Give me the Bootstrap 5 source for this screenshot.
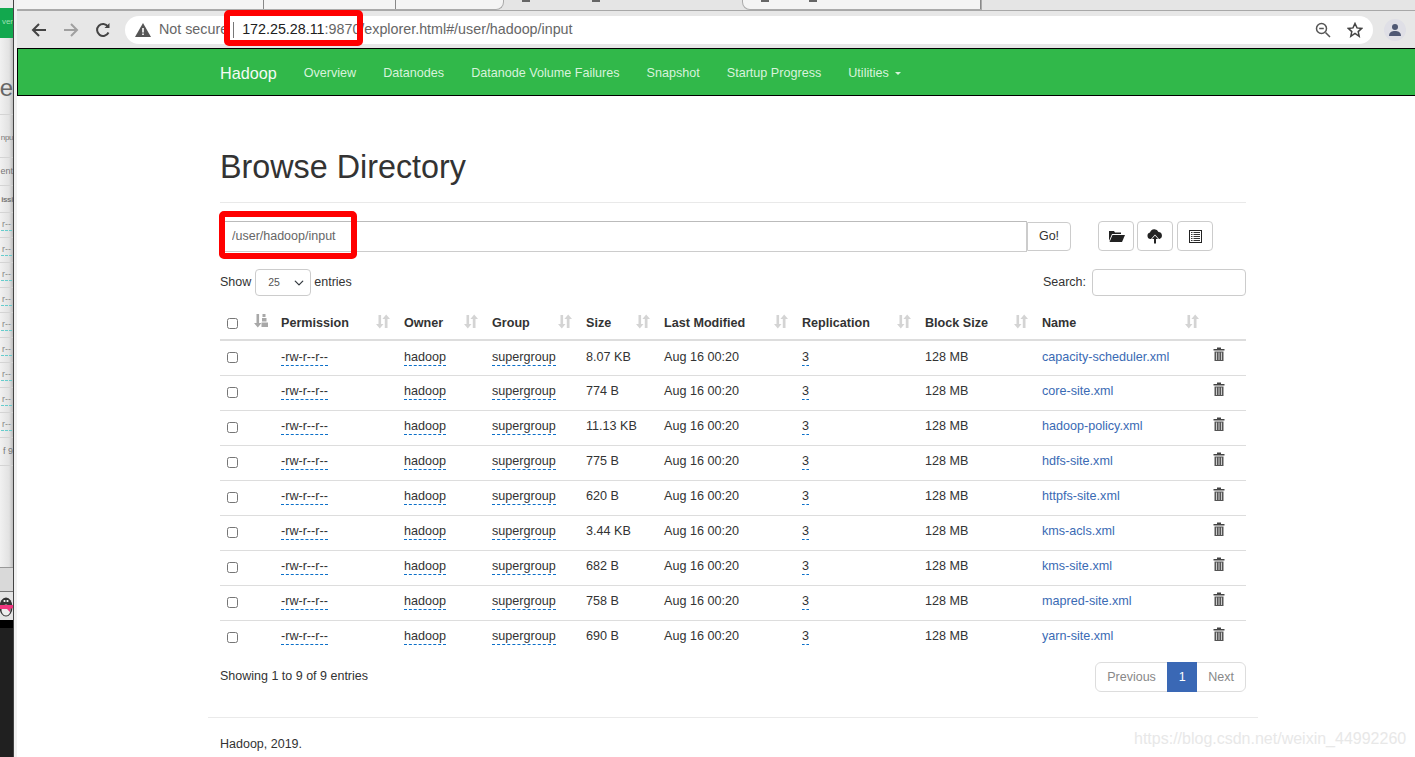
<!DOCTYPE html>
<html lang="en">
<head>
<meta charset="utf-8">
<title>Browsing HDFS</title>
<link href="https://cdn.jsdelivr.net/npm/bootstrap@5.3.0/dist/css/bootstrap.min.css" rel="stylesheet">
<style>
html,body{height:757px;overflow:hidden}
body{font-family:"Liberation Sans",Arial,sans-serif;font-size:13px;color:#333;background:#fff;position:relative;display:flex}
.sliver{width:14px;flex:none;height:757px;overflow:hidden;border-right:1px solid #444;display:flex;flex-direction:column;font-size:9px;color:#777;white-space:nowrap;background:linear-gradient(90deg,#f1f1f1,#e2e2e2 70%,#bdbdbd)}
.slgap{width:3px;flex:none;background:#f1f1f1}
.sl-top{height:8px;flex:none;background:#ebebeb}
.sl-green{height:30px;flex:none;background:#12a84e;color:#9fe0b5;font-size:8px;line-height:28px;display:flex;justify-content:flex-end;overflow:hidden}
.sl-gap{height:30px;flex:none}
.sl-e{height:47px;flex:none;font-size:24px;line-height:40px;color:#666;display:flex;justify-content:flex-end;overflow:hidden;border-bottom:1px solid #d4d4d4}
.sl-row{flex:none;display:flex;justify-content:flex-end;overflow:hidden;border-bottom:1px solid #d4d4d4}
.tight{font-size:8px;letter-spacing:-.4px}
.h43{height:43px;line-height:46px}.h28{height:28px;line-height:27px}.h27{height:27px;line-height:27px}
.sl-perm{flex:none;height:25px;display:flex;justify-content:center;align-items:center;border-bottom:1px solid #d4d4d4;color:#888}
.sl-perm span{border-bottom:1px dashed #6cc;line-height:9px;font-size:9px;padding:0 1px 1px}
.sl-fill{height:101px;flex:none}
.sl-foot{height:25px;flex:none;background:#d9d9d9;border-top:1px solid #999;border-bottom:1px solid #777}
.sl-peng{height:28px;flex:none;background:#e4e4e4;display:flex;justify-content:flex-end;align-items:center;overflow:hidden}
.sl-black-top{height:8px;background:#000;flex:none}
.sl-black{flex:1;background:#202020}
.main{flex:1;min-width:0;display:flex;flex-direction:column;background:#f3f3f3}
.tabstrip{height:11px;background:#e5e5e5;border-bottom:1px solid #a8a8a8;display:flex;flex:none;overflow:hidden}
.tabcur{width:487px;height:10px;background:#f4f4f4;border-right:1px solid #aaa;border-bottom:1px solid #aaa;border-radius:0 0 8px 0;display:flex;flex:none}
.tabnext{width:240px;height:10px;border:1px solid #aaa;border-top:0;border-radius:0 0 0 8px;background:#f4f4f4;display:flex;flex:none}
.tsep{width:1px;height:9px;background:#888;flex:none}
.s1{margin-left:auto;margin-right:131px}.s2{margin-right:107px}
.tfrag{width:8px;height:2px;background:#666;flex:none}
.f1{margin-left:18px}.f2{margin-left:62px;margin-right:142px}.f3{margin-left:18px}.f4{margin-left:40px}
.toolbar{height:37px;background:#e7e7e7;display:flex;align-items:center;flex:none;padding-left:6px}
.navico{width:32px;display:flex;justify-content:center;flex:none}
.omni{width:1248px;height:28px;border-radius:14px;background:#fff;margin-left:6px;display:flex;align-items:center;font-size:14.3px;color:#666;padding:0 10px 0 10px;white-space:nowrap}
.omni b{font-weight:400;color:#202020}
.omni-sep{width:1px;height:16px;background:#777;margin:0 8px 0 5px}
.omni-end{margin-left:auto;display:flex;gap:16px;align-items:center}
.avatar{width:22px;height:22px;border-radius:50%;background:#dfdfe6;margin-left:11px;display:flex;align-items:center;justify-content:center;flex:none}
.hnav{height:48px;background:#31b84a;border:1px solid #000;border-right:0;padding:2px 0 0 202px;flex:none;flex-wrap:nowrap;justify-content:flex-start}
.hnav .navbar-brand{color:#fff;font-size:16.2px;padding:0;margin-right:27px;opacity:.95}
.hnav .nav-link{color:#d8f3dc;font-size:12.6px;padding:1px 0 0;margin-right:27px}
.hnav .dropdown-toggle::after{vertical-align:2px;margin-left:6px;color:#d8f3dc}
.pagebody{flex:1;background:#fff;padding:0 169px 0 203px;min-height:0}
.ptitle{font-size:32.3px;font-weight:400;color:#333;margin:0;padding:52px 0 16px;line-height:38px;border-bottom:1px solid #e9e9e9}
.pathrow{margin-top:18px;height:31px;display:flex;align-items:flex-start}
.pathinput{width:807px;height:31px;border:1px solid #ccc;border-top-color:#bbb;border-radius:0;font-size:12.5px;color:#666;padding:0 11px 2px;box-shadow:none;font-family:inherit}
.gobtn{height:29px;width:44px;border:1px solid #ccc;border-radius:0 4px 4px 0;font-size:12.5px;color:#333;padding:0;margin:1px 0 0 0;background:#fff;flex:none}
.iconbtn{width:36px;height:30px;border:1px solid #ccc;border-radius:4px;background:#fff;padding:0;display:flex;align-items:center;justify-content:center;flex:none}
.tools{margin-left:27px;gap:3px}
.tgap{margin-left:1px}
.lenrow{margin-top:17px;height:27px;font-size:12.5px;color:#333}
.lensel{width:56px;height:27px;font-size:10.5px;padding:0 0 0 12px;border:1px solid #ccc;border-radius:4px;color:#555;background-position:right 5px center;background-size:12px 10px;margin:0 3px 0 4px}
.searchbox{width:154px;height:27px;border:1px solid #ccc;border-radius:4px;margin-left:6px;padding:0 6px;font-size:12px}
.dtable{margin:8px 0 0;table-layout:fixed;width:1026px;font-size:12.6px;color:#333;border-color:#ddd}
.dtable th{height:36px;padding:0 8px;font-weight:700;font-size:12.6px;color:#333;border-bottom:2px solid #ddd;vertical-align:middle;position:relative;white-space:nowrap;padding-top:3px}
.dtable td{height:35px;padding:0 8px 2px;border-bottom:1px solid #ddd;vertical-align:middle;white-space:nowrap;color:#333}
.dtable tbody tr:first-child td{padding-bottom:0}
.dtable tr:last-child td{border-bottom:0}
.srt{position:absolute;right:6px;top:10px}
.srt0{position:absolute;left:7px;top:9px}
.dash{border-bottom:1px dashed #0a6fc9;padding-bottom:1px;color:#333}
.ck{width:11px;height:11px;border:1px solid #767676;border-radius:2.5px;margin:0;background:#fff;appearance:none;display:block;margin-left:-1px}
.dtable td .ck{margin-top:2px}
.dtable tbody tr:first-child td .ck{margin-top:0}
.flink{color:#3a6ab4;text-decoration:none}
.trash{display:block;margin:-5px 0 0 0}
.dtable tbody tr:first-child .trash{margin-top:-7px}
.foot{display:flex;justify-content:space-between;align-items:flex-start;margin-top:7px;font-size:12.5px}
.foot-info{padding-top:5px}
.pagi{margin:0}
.pagi .page-link{height:30px;font-size:12.5px;line-height:17px;color:#888;border-color:#ddd;padding:6px 11px}
.pagi .page-item:first-child .page-link{padding:6px 11.5px}
.pagi .page-item.active .page-link{background:#3a68b5;border-color:#3a68b5;color:#fff;padding:6px 10.5px}
.hrfoot{border-top:1px solid #eaeaea;margin:25px -12px 0;height:0}
.copy{margin-top:17px;font-size:12.5px}
.redbox{position:absolute;border:6px solid #f00;border-radius:5px;pointer-events:none}
.r1{left:224px;top:10px;width:139px;height:36px}
.r2{left:219px;top:211px;width:138px;height:48px}
.wmark{position:absolute;left:1134px;top:727px;font-size:16px;color:#e8e8e8;white-space:nowrap}
</style>
</head>
<body>
<aside class="sliver" aria-hidden="true">
<div class="sl-top"></div><div class="sl-green">ver</div><div class="sl-gap"></div>
<div class="sl-e">e</div>
<div class="sl-row h43 tight">npu</div><div class="sl-row h28">ent</div><div class="sl-row h27 tight"><b>issi</b></div>
<div class="sl-perm"><span>r--</span></div><div class="sl-perm"><span>r--</span></div><div class="sl-perm"><span>r--</span></div><div class="sl-perm"><span>r--</span></div><div class="sl-perm"><span>r--</span></div><div class="sl-perm"><span>r--</span></div><div class="sl-perm"><span>r--</span></div><div class="sl-perm"><span>r--</span></div><div class="sl-perm"><span>r--</span></div>
<div class="sl-row h28">f 9</div>
<div class="sl-fill"></div>
<div class="sl-foot"></div>
<div class="sl-peng"><svg width="13" height="22" viewBox="0 0 13 22"><ellipse cx="6" cy="12" rx="6.500" ry="9.500" fill="#333"/><ellipse cx="6" cy="15" rx="4.500" ry="5.500" fill="#eee"/><circle cx="4.500" cy="6" r="1.100" fill="#fff"/><circle cx="7.500" cy="6" r="1.100" fill="#fff"/><path d="M0 10h13v3l-3 1 0 3-3-3H0Z" fill="#f0357e"/></svg></div>
<div class="sl-black-top"></div><div class="sl-black"></div>
</aside>
<div class="slgap"></div>
<div class="main">
<div class="tabstrip"><div class="tabcur"><span class="tsep s1"></span><span class="tsep s2"></span></div><span class="tfrag f1"></span><span class="tfrag f2"></span><div class="tabnext"><span class="tfrag f3"></span><span class="tfrag f4"></span><span class="tsep ms-auto"></span></div></div>
<div class="toolbar">
<div class="navico"><svg width="18" height="18" viewBox="0 0 18 18" fill="none" stroke="#444" stroke-width="2"><path d="M16 9H3M9 3 3 9l6 6"/></svg></div>
<div class="navico"><svg width="18" height="18" viewBox="0 0 18 18" fill="none" stroke="#a0a0a0" stroke-width="2"><path d="M2 9h13M9 3l6 6-6 6"/></svg></div>
<div class="navico"><svg width="18" height="18" viewBox="0 0 18 18" fill="none" stroke="#444" stroke-width="2"><path d="M14.500 11.500A6 6 0 1 1 14 5.500"/><path d="M15.500 2v5h-5" fill="#444" stroke="none"/></svg></div>
<div class="omni">
<svg width="16" height="14" viewBox="0 0 16 14" class="me-2"><path d="M8 0 16 14H0Z" fill="#555"/><path d="M7.200 5h1.600v4.500H7.200ZM7.200 10.500h1.600V12H7.200Z" fill="#fff"/></svg>
<span>Not secure</span><span class="omni-sep"></span><b>172.25.28.11</b><span>:9870/explorer.html#/user/hadoop/input</span>
<span class="omni-end">
<svg width="16" height="16" viewBox="0 0 16 16" fill="none" stroke="#555" stroke-width="1.500"><circle cx="6.500" cy="6.500" r="5"/><path d="M10.500 10.500 15 15M4.200 6.500h4.600"/></svg>
<svg width="16" height="16" viewBox="0 0 16 16" fill="none" stroke="#444" stroke-width="1.500"><path d="m8 1.500 2 4.400 4.700.5-3.500 3.200 1 4.700L8 11.500l-4.200 2.800 1-4.700L1.300 6.400 6 5.900Z"/></svg>
</span>
</div>
<div class="avatar"><svg width="14" height="14" viewBox="0 0 14 14" fill="#4f5874"><circle cx="7" cy="4" r="3"/><path d="M1 13c0-4 3-5 6-5s6 1 6 5Z"/></svg></div>
</div>
<nav class="navbar hnav">
<a class="navbar-brand" href="#">Hadoop</a>
<a class="nav-link" href="#">Overview</a><a class="nav-link" href="#">Datanodes</a><a class="nav-link" href="#">Datanode Volume Failures</a><a class="nav-link" href="#">Snapshot</a><a class="nav-link" href="#">Startup Progress</a><a class="nav-link dropdown-toggle" href="#">Utilities</a>
</nav>
<div class="pagebody">
<h1 class="ptitle">Browse Directory</h1>
<div class="pathrow">
<input class="pathinput form-control" value="/user/hadoop/input" aria-label="path">
<button class="gobtn btn">Go!</button>
<div class="tools d-flex">
<button class="iconbtn btn" aria-label="Create directory"><svg width="17" height="14" viewBox="0 0 17 14" fill="#222"><path d="M1 2h5l1 1.500h6V5H4L1 12Z"/><path d="M4.500 6H17l-3 7H1.500Z"/></svg></button>
<button class="iconbtn btn" aria-label="Upload"><svg width="16" height="15" viewBox="0 0 16 15" fill="#222"><path d="M4 10H3.500A3.300 3.300 0 0 1 3 3.500 4.500 4.500 0 0 1 11.500 3 3.600 3.600 0 0 1 12.500 10H12L8 5.500Z"/><path d="M8 6.500 11 10H9v4.500H7V10H5Z"/></svg></button>
<button class="iconbtn btn tgap" aria-label="Cut paste"><svg width="13" height="13" viewBox="0 0 13 13"><rect x=".5" y=".5" width="12" height="12" fill="#fff" stroke="#222"/><path d="M2 2.500h9M2 4.500h9M2 6.500h9M2 8.500h9M2 10.500h9" stroke="#333"/><path d="M4 2v10" stroke="#fff"/></svg></button>
</div>
</div>
<div class="lenrow d-flex justify-content-between align-items-center">
<label class="d-flex align-items-center">Show <select class="lensel form-select" aria-label="entries"><option>25</option></select> entries</label>
<label class="d-flex align-items-center">Search:<input class="searchbox" aria-label="search"></label>
</div>
<table class="table dtable">
<colgroup><col style="width:27px"><col style="width:26px"><col style="width:123px"><col style="width:88px"><col style="width:94px"><col style="width:78px"><col style="width:138px"><col style="width:123px"><col style="width:117px"><col style="width:171px"><col></colgroup>
<thead><tr id="hd"></tr></thead>
<tbody id="bd"></tbody>
</table>
<div class="foot">
<div class="foot-info">Showing 1 to 9 of 9 entries</div>
<ul class="pagination pagi"><li class="page-item"><a class="page-link" href="#">Previous</a></li><li class="page-item active"><a class="page-link" href="#">1</a></li><li class="page-item"><a class="page-link" href="#">Next</a></li></ul>
</div>
<div class="hrfoot"></div>
<div class="copy">Hadoop, 2019.</div>
</div>
</div>
<div class="redbox r1"></div><div class="redbox r2"></div>
<div class="wmark">https://blog.csdn.net/weixin_44992260</div>
<script>
var S='<svg class="srt" width="14" height="15" viewBox="0 0 14 15" fill="#d4d4d4"><path d="M2.500 1h2.600v9h2.400L3.800 14.500 0 10h2.500ZM8.800 5H6.400L10.200.5 14 5h-2.500v9H8.800Z"/></svg>';
var A='<svg class="srt0" width="14" height="15" viewBox="0 0 14 15" fill="#a8a8a8"><path d="M2.500 1h2.600v9h2.400L3.800 14.500 0 10h2.500Z"/><path d="M8.500 1h3v3h-3ZM8 5h4.500v3.500H8ZM7.500 9.500H14V14H7.500Z"/></svg>';
var h=['Permission','Owner','Group','Size','Last Modified','Replication','Block Size','Name'];
var x='<th><input type="checkbox" class="ck" aria-label="all"></th><th>'+A+'</th>';
h.forEach(function(t){x+='<th>'+t+S+'</th>'});x+='<th></th>';
document.getElementById('hd').innerHTML=x;
var R=[['8.07 KB','capacity-scheduler.xml'],['774 B','core-site.xml'],['11.13 KB','hadoop-policy.xml'],['775 B','hdfs-site.xml'],['620 B','httpfs-site.xml'],['3.44 KB','kms-acls.xml'],['682 B','kms-site.xml'],['758 B','mapred-site.xml'],['690 B','yarn-site.xml']];
var T='<svg class="trash" width="12" height="14" viewBox="0 0 12 14"><path d="M4 .5h4v1.500h3.500v1.500H.5V2H4Z" fill="#444"/><path d="M1.500 4.500h9V14h-9Z" fill="#555"/><path d="M3.500 5.500v7.500M6 5.500v7.500M8.500 5.500v7.500" stroke="#ccc"/></svg>';
var y='';
R.forEach(function(r){y+='<tr><td><input type="checkbox" class="ck" aria-label="select"></td><td></td><td><span class="dash">-rw-r--r--</span></td><td><span class="dash">hadoop</span></td><td><span class="dash">supergroup</span></td><td>'+r[0]+'</td><td>Aug 16 00:20</td><td><span class="dash">3</span></td><td>128 MB</td><td><a class="flink" href="#">'+r[1]+'</a></td><td>'+T+'</td></tr>'});
document.getElementById('bd').innerHTML=y;
</script>
<script src="https://cdn.jsdelivr.net/npm/bootstrap@5.3.0/dist/js/bootstrap.bundle.min.js"></script>
</body>
</html>
